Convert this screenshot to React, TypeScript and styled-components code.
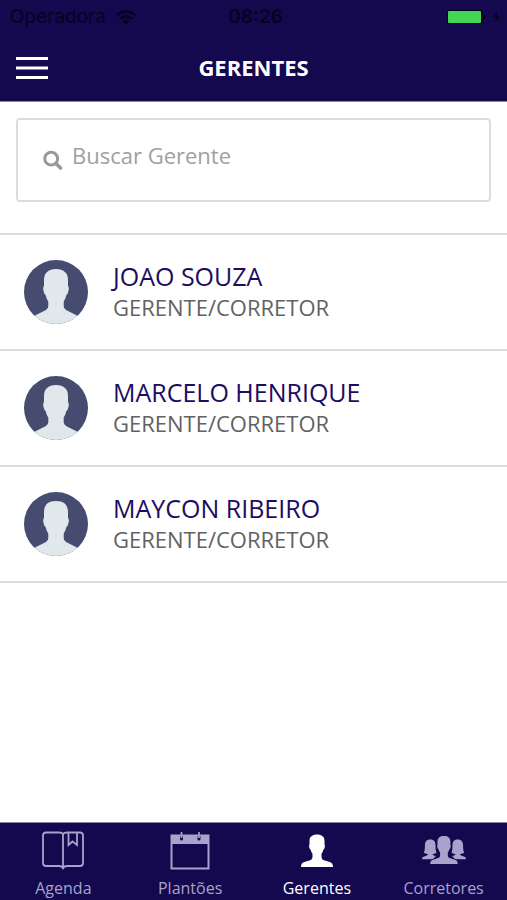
import React from "react";
import styled, { createGlobalStyle } from "styled-components";

const navy = "#14084f";
const muted = "#a9a2cb";

const GlobalStyle = createGlobalStyle`
  *, *::before, *::after { box-sizing: border-box; }
  body { margin: 0; background: #fff; font-family: "Open Sans", "Noto Sans", sans-serif; }
  button, input { font: inherit; }
`;

const Screen = styled.div`
  display: flex;
  flex-direction: column;
  min-height: 100vh;
`;

const TopBar = styled.header`
  background: ${navy};
  border-bottom: 1px solid #8d87a9;
`;

const StatusBar = styled.div`
  display: grid;
  grid-template-columns: 1fr auto 1fr;
  align-items: center;
  height: 34px;
  padding: 0 6px 0 10px;
  color: #060320;
  font-family: Inter, sans-serif;
  font-size: 19px;
  line-height: 24px;
`;

const Carrier = styled.span`
  display: flex;
  align-items: center;
  gap: 10px;
`;

const Clock = styled.time`
  font-weight: 600;
`;

const Battery = styled.span`
  display: flex;
  justify-content: flex-end;
`;

const TitleRow = styled.div`
  display: grid;
  grid-template-columns: 48px 1fr 48px;
  align-items: center;
  height: 67px;
  padding: 0 8px;
`;

const MenuButton = styled.button`
  display: flex;
  align-items: center;
  justify-content: center;
  height: 48px;
  padding: 0;
  border: 0;
  background: none;
  color: #fff;
`;

const Title = styled.h1`
  margin: 0;
  padding-bottom: 2px;
  color: #fff;
  font-size: 22px;
  font-weight: 700;
  line-height: 30px;
  text-align: center;
`;

const Main = styled.main`
  flex: 1;
`;

const SearchBox = styled.label`
  display: flex;
  align-items: center;
  gap: 9px;
  height: 84px;
  margin: 16px 16px 31px;
  padding: 0 25px;
  border: 2px solid #dcdcdc;
  border-radius: 4px;
  color: #999;

  svg { flex: none; }
`;

const SearchInput = styled.input`
  flex: 1;
  min-width: 0;
  padding: 0 0 10px;
  border: 0;
  outline: 0;
  background: none;
  color: #555;
  font-size: 22px;
  line-height: 32px;

  &::placeholder { color: #a0a0a0; opacity: 1; }
`;

const List = styled.ul`
  margin: 0;
  padding: 0;
  list-style: none;
  border-top: 2px solid #dcdcdc;
`;

const Row = styled.li`
  display: flex;
  align-items: center;
  gap: 25px;
  min-height: 116px;
  padding: 0 24px;
  border-bottom: 2px solid #dcdcdc;
`;

const Avatar = styled.svg`
  flex: none;
  width: 64px;
  height: 64px;
  border-radius: 50%;
  background: #454c70;
`;

const Details = styled.div`
  padding-bottom: 2px;
`;

const Name = styled.div`
  color: #1c0d61;
  font-size: 25px;
  line-height: 33px;
`;

const Role = styled.div`
  color: #626262;
  font-size: 22px;
  line-height: 29px;
`;

const TabBar = styled.nav`
  display: grid;
  grid-template-columns: repeat(4, 1fr);
  height: 78px;
  border-top: 1px solid #8d87a9;
  background: ${navy};
`;

const Tab = styled.a<{ $active?: boolean }>`
  display: flex;
  flex-direction: column;
  align-items: center;
  padding-top: 7px;
  color: ${(p) => (p.$active ? "#fff" : muted)};
  font-size: 16px;
  line-height: 24px;
  text-decoration: none;
`;

const WifiIcon = () => (
  <svg width="20" height="15" viewBox="0 0 20 15" fill="none" stroke="currentColor" strokeWidth="2.6" aria-hidden="true">
    <path d="M1 5.3C6 .3 14 .3 19 5.3M4.3 8.8c3.2-3.2 8.2-3.2 11.4 0" />
    <path d="M6.7 11.2c1.8-1.8 4.8-1.8 6.6 0L10 14.5z" fill="currentColor" stroke="none" />
  </svg>
);

const BatteryIcon = () => (
  <svg width="54" height="16" viewBox="0 0 54 16" role="img" aria-label="Bateria carregando">
    <rect x="0" y="1" width="36" height="14" rx="2" fill="#060320" />
    <rect x="1" y="2" width="33" height="12" rx="1" fill="#43d654" />
    <path d="M36 5c3 1 3 5 0 6z" fill="#060320" />
    <path d="M50 3l-4 5h3l-1 5 5-6h-3z" fill="#060320" />
  </svg>
);

const MenuIcon = () => (
  <svg width="32" height="24" viewBox="0 0 32 24" fill="currentColor" aria-hidden="true">
    <path d="M0 1h32v3H0zM0 10.5h32v3H0zM0 20h32v3H0z" />
  </svg>
);

const SearchIcon = () => (
  <svg width="20" height="20" viewBox="0 0 20 20" fill="none" stroke="currentColor" aria-hidden="true">
    <circle cx="8.2" cy="8.7" r="6.4" strokeWidth="3" />
    <path d="M13 13.5l4.5 4.5" strokeWidth="3.6" strokeLinecap="round" />
  </svg>
);

const AvatarIcon = () => (
  <Avatar viewBox="0 0 64 64" aria-hidden="true">
    <path
      fill="#e1e8ec"
      d="M32 9C24 9 20 13 20 20v6c-1.200 1-1 4 0 6.500.5 1.500 1 2.200 1.700 2.500.6 2.800 1.300 4.500 2.600 6.500V46c0 2.500-1.500 3.500-4.300 4.900L10 56v8h44v-8l-10-5.100c-2.800-1.400-4.300-2.400-4.300-4.900v-4.500c1.300-2 2-3.700 2.600-6.500.7-.3 1.200-1 1.700-2.500 1-2.500 1.200-5.500 0-6.500v-6C44 13 40 9 32 9z"
    />
  </Avatar>
);

const BookIcon = () => (
  <svg width="42" height="46" viewBox="0 0 42 46" fill="none" stroke="currentColor" strokeWidth="1.8" aria-hidden="true">
    <path d="M21 4Q20 2.5 17 2.5H4Q1 2.5 1 5.5V33Q1 36 4 36h13q3 0 4 2 1-2 4-2h13q3 0 3-3V5.5q0-3-3-3H25q-3 0-4 1.5zM21 4v35" />
    <path d="M26.5 3v12l4-3.5 4.5 3.5V3" />
  </svg>
);

const CalendarIcon = () => (
  <svg width="40" height="46" viewBox="0 0 40 46" aria-hidden="true">
    <path d="M1.5 5.5h37v33h-37z" fill="none" stroke="currentColor" strokeWidth="2" />
    <path d="M1 5h38v9H1z" fill="currentColor" />
    <path d="M11.5 7v2M29 7v2" stroke={navy} strokeWidth="3" strokeLinecap="round" />
    <path d="M11.5 2v6M29 2v6" stroke="currentColor" strokeWidth="1.7" />
  </svg>
);

const bust =
  "M16 0c-4.800 0-7.500 2.300-7.500 6.200v3.800c-.6.800-.5 2.400 0 3.700.3.900.6 1.400 1.200 1.600.4 1.700 1 2.900 1.800 4v3c0 2-1 3.100-3.200 3.700l-5 1.500C.9 28.200 0 29.700 0 32.500h32c0-2.800-.9-4.300-3.300-5l-5-1.500c-2.200-.6-3.200-1.700-3.200-3.700v-3c.8-1.100 1.400-2.300 1.800-4 .6-.2.900-.7 1.200-1.600.5-1.300.6-2.900 0-3.700V6.200C23.500 2.300 20.800 0 16 0z";

const PersonIcon = () => (
  <svg width="32" height="46" viewBox="0 0 32 46" fill="currentColor" aria-hidden="true">
    <path transform="translate(0 4.5)" d={bust} />
  </svg>
);

const sideBust =
  "M9 0C4.800 0 3.200 2.500 3.200 6.500c0 3.500-.4 6-1.200 8 1.500 1 3 1.400 4.500 1.200 0 1.300-1.500 1.800-3.500 2.600C1 19 0 19.700 0 21.500h12l3-3.500c-2-.4-3.500-1-3.500-2.300 1.500.2 3-.2 4.300-1.200-.8-2-1.100-4.500-1.100-8C14.700 2.500 13.200 0 9 0z";

const GroupIcon = () => (
  <svg width="46" height="46" viewBox="0 0 46 46" fill="currentColor" aria-hidden="true">
    <path transform="translate(1 9.5) scale(.92)" d={sideBust} />
    <path transform="translate(45 9.5) scale(-.92 .92)" d={sideBust} />
    <path transform="translate(9.2 6) scale(.86)" d={bust} stroke={navy} strokeWidth="1.5" paintOrder="stroke" />
  </svg>
);

const managers = ["JOAO SOUZA", "MARCELO HENRIQUE", "MAYCON RIBEIRO"];

const tabs = [
  { label: "Agenda", Icon: BookIcon },
  { label: "Plantões", Icon: CalendarIcon },
  { label: "Gerentes", Icon: PersonIcon },
  { label: "Corretores", Icon: GroupIcon },
];

export default function App() {
  return (
    <>
      <GlobalStyle />
      <Screen>
        <TopBar>
          <StatusBar>
            <Carrier>Operadora <WifiIcon /></Carrier>
            <Clock>08:26</Clock>
            <Battery><BatteryIcon /></Battery>
          </StatusBar>
          <TitleRow>
            <MenuButton type="button" aria-label="Menu"><MenuIcon /></MenuButton>
            <Title>GERENTES</Title>
          </TitleRow>
        </TopBar>
        <Main>
          <SearchBox>
            <SearchIcon />
            <SearchInput type="text" placeholder="Buscar Gerente" aria-label="Buscar Gerente" />
          </SearchBox>
          <List>
            {managers.map((name) => (
              <Row key={name}>
                <AvatarIcon />
                <Details>
                  <Name>{name}</Name>
                  <Role>GERENTE/CORRETOR</Role>
                </Details>
              </Row>
            ))}
          </List>
        </Main>
        <TabBar>
          {tabs.map(({ label, Icon }) => {
            const active = label === "Gerentes";
            return (
              <Tab key={label} href={`#${label}`} $active={active} aria-current={active ? "page" : undefined}>
                <Icon />
                {label}
              </Tab>
            );
          })}
        </TabBar>
      </Screen>
    </>
  );
}
